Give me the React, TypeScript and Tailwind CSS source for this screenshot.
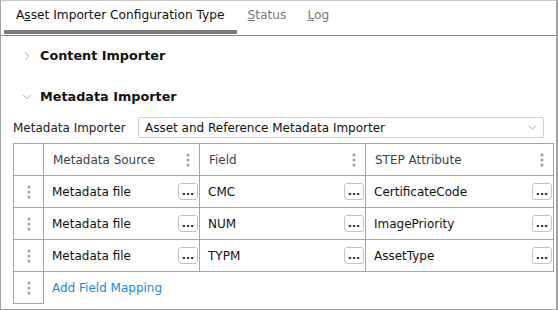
import { ChevronDown, ChevronRight } from "lucide-react";

const font = { fontFamily: '"DejaVu Sans", Verdana, sans-serif' };

const Kebab = () => (
  <svg width="4" height="14" viewBox="0 0 4 14" className="shrink-0">
    <circle cx="2" cy="2" r="1.6" fill="#a3a3a3" />
    <circle cx="2" cy="7" r="1.6" fill="#a3a3a3" />
    <circle cx="2" cy="12" r="1.6" fill="#a3a3a3" />
  </svg>
);

const DotsButton = () => (
  <button className="flex h-[17px] w-[20px] shrink-0 items-end justify-center rounded-[3px] border border-[#c4c4c4] bg-white pb-[2px] text-[11px] font-bold leading-[10px] text-[#222]">
    ...
  </button>
);

const rows = [
  { source: "Metadata file", field: "CMC", attr: "CertificateCode" },
  { source: "Metadata file", field: "NUM", attr: "ImagePriority" },
  { source: "Metadata file", field: "TYPM", attr: "AssetType" },
];

const HeaderCell = ({ label }: { label: string }) => (
  <th className="h-[32px] border border-[#a6a6a6] p-0 font-normal">
    <div className="flex items-center justify-between pl-[9px] pr-[9px] text-[#3a3f4e]">
      <span>{label}</span>
      <Kebab />
    </div>
  </th>
);

const ValueCell = ({ value }: { value: string }) => (
  <td className="h-[32px] border border-[#a6a6a6] p-0">
    <div className="flex items-center justify-between pl-[8px] pr-[1px] text-[#111]">
      <span>{value}</span>
      <DotsButton />
    </div>
  </td>
);

const App = () => {
  return (
    <div
      style={font}
      className="flex h-[310px] w-[558px] flex-col border border-r-2 border-[#a0a0a0] border-t-[#c8c8c8] bg-white text-[12px]"
    >
      <div className="flex h-[35px] shrink-0 border-b border-[#8a8a8a] pl-[3px]">
        <div className="flex flex-col">
          <div className="flex h-[29px] items-center pl-[12px] pr-[12px] text-[12.2px] text-[#111]">
            <span>
              A<span className="underline">s</span>set Importer Configuration Type
            </span>
          </div>
          <div className="h-[4px] bg-[#7a7a7a]" />
        </div>
        <div className="flex h-[29px] items-center px-[11px] text-[12.2px] text-[#7a7a7a]">
          <span>
            <span className="underline">S</span>tatus
          </span>
        </div>
        <div className="flex h-[29px] items-center px-[10px] text-[12.2px] text-[#7a7a7a]">
          <span>
            <span className="underline">L</span>og
          </span>
        </div>
      </div>

      <div className="flex flex-col px-[12px]">
        <div className="mt-[10px] flex h-[20px] items-center gap-[6px] pl-[7px]">
          <ChevronRight size={14} strokeWidth={1.4} color="#999" />
          <span className="text-[12.8px] font-bold text-[#111]">
            Content Importer
          </span>
        </div>
        <div className="mt-[21px] flex h-[20px] items-center gap-[6px] pl-[7px]">
          <ChevronDown size={14} strokeWidth={1.4} color="#999" />
          <span className="text-[12.8px] font-bold text-[#111]">
            Metadata Importer
          </span>
        </div>

        <div className="mt-[10px] flex items-center">
          <span className="w-[125px] shrink-0 text-[#222]">Metadata Importer</span>
          <div className="flex h-[21px] flex-1 items-center justify-between rounded-[2px] border border-[#d2d2d2] pl-[6px] pr-[4px] text-[#111]">
            <span>Asset and Reference Metadata Importer</span>
            <ChevronDown size={13} strokeWidth={1.2} color="#777" />
          </div>
        </div>

        <table className="mt-[5px] w-[540px] table-fixed border-collapse">
          <colgroup>
            <col className="w-[30px]" />
            <col className="w-[156px]" />
            <col className="w-[166px]" />
            <col className="w-[188px]" />
          </colgroup>
          <thead>
            <tr>
              <th className="h-[32px] border border-[#a6a6a6] p-0" />
              <HeaderCell label="Metadata Source" />
              <HeaderCell label="Field" />
              <HeaderCell label="STEP Attribute" />
            </tr>
          </thead>
          <tbody>
            {rows.map((row, i) => (
              <tr key={i}>
                <td className="h-[32px] border border-[#a6a6a6] p-0">
                  <div className="flex justify-center">
                    <Kebab />
                  </div>
                </td>
                <ValueCell value={row.source} />
                <ValueCell value={row.field} />
                <ValueCell value={row.attr} />
              </tr>
            ))}
            <tr>
              <td className="h-[32px] border border-[#a6a6a6] p-0">
                <div className="flex justify-center">
                  <Kebab />
                </div>
              </td>
              <td colSpan={3} className="p-0 pl-[8px] text-[#1a8ad8]">
                Add Field Mapping
              </td>
            </tr>
          </tbody>
        </table>
      </div>
    </div>
  );
};

export default App;
